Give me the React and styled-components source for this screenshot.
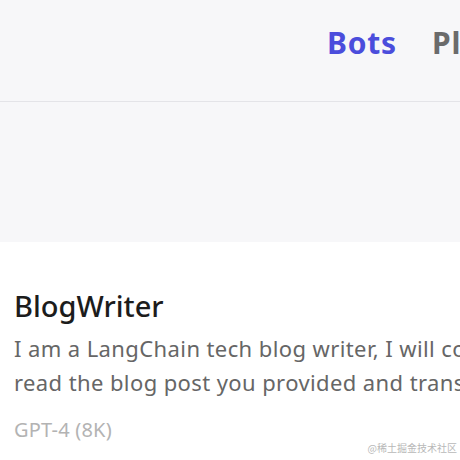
import React from 'react'
import styled, { createGlobalStyle } from 'styled-components'

const Global = createGlobalStyle`
  body {
    margin: 0;
    background: #ffffff;
    font-family: "Noto Sans", "Open Sans", sans-serif;
    overflow: hidden;
  }
`

const Page = styled.div`
  width: 460px;
  height: 460px;
  overflow: hidden;
  position: relative;
  background: #ffffff;
`

const Header = styled.header`
  height: 102px;
  background: #f7f7f9;
  border-bottom: 1px solid #e4e4e8;
  display: flex;
  align-items: center;
  gap: 35px;
  padding-left: 327px;
  white-space: nowrap;
  box-sizing: border-box;
`

const NavItem = styled.span`
  font-size: 30px;
  font-weight: 700;
  letter-spacing: 0.8px;
  color: ${props => props.active ? '#4b4ddc' : '#6b6b6b'};
  margin-top: -16px;
`

const Banner = styled.div`
  height: 140px;
  background: #f7f7f9;
`

const Card = styled.section`
  padding: 44px 14px 0;
  white-space: nowrap;
`

const Title = styled.h2`
  margin: 0;
  font-size: 29px;
  font-weight: 500;
  color: #1c1c1c;
  line-height: 40px;
`

const Desc = styled.p`
  margin: 5px 0 0;
  font-size: 22px;
  line-height: 34px;
  letter-spacing: 0.4px;
  color: #666666;
`

const Model = styled.div`
  margin-top: 17px;
  font-size: 20px;
  letter-spacing: 0.2px;
  color: #b3b3b3;
`

const Watermark = styled.div`
  position: absolute;
  right: 3px;
  bottom: 5px;
  font-size: 10px;
  color: #b8b8b8;
  font-family: "Noto Sans CJK SC", sans-serif;
`

export default function App() {
  return (
    <Page>
      <Global />
      <Header>
        <NavItem active>Bots</NavItem>
        <NavItem>Plugins</NavItem>
      </Header>
      <Banner />
      <Card>
        <Title>BlogWriter</Title>
        <Desc>
          I am a LangChain tech blog writer, I will convert...<br />
          read the blog post you provided and translate it
        </Desc>
        <Model>GPT-4 (8K)</Model>
      </Card>
      <Watermark>@稀土掘金技术社区</Watermark>
    </Page>
  )
}
